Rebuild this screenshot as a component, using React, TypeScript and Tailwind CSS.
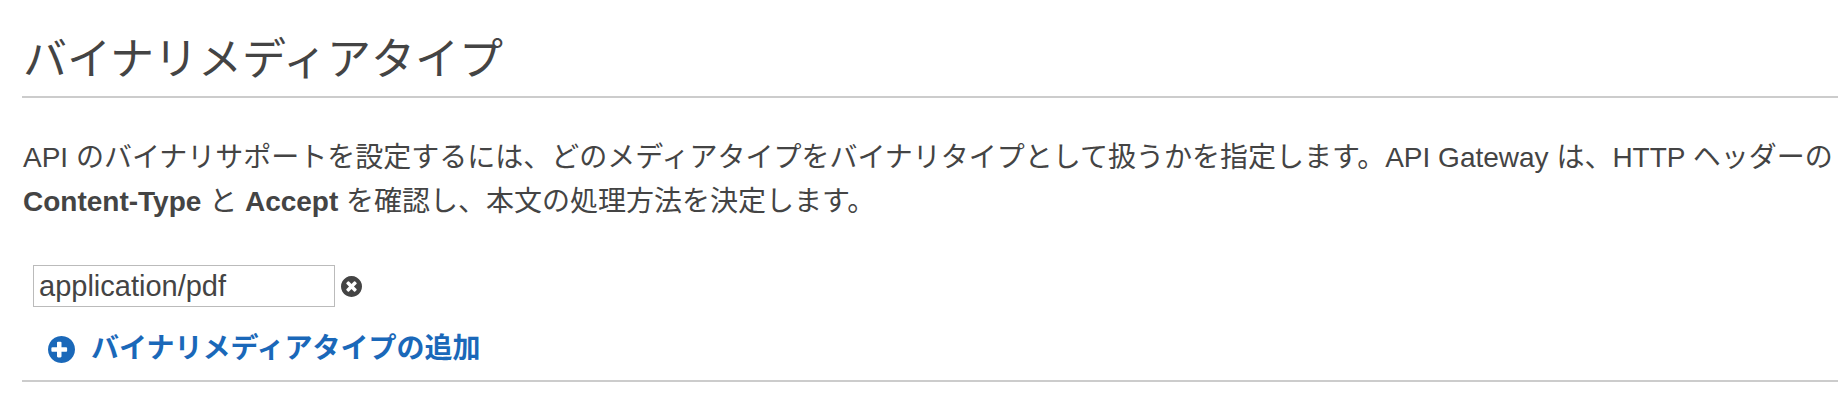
import { useState } from "react";

function PlusCircleIcon() {
  return (
    <svg viewBox="128 128 1536 1536" fill="currentColor" aria-hidden="true" className="size-[27px]">
      <path d="M1216 960v-128q0-26-19-45t-45-19h-256v-256q0-26-19-45t-45-19h-128q-26 0-45 19t-19 45v256h-256q-26 0-45 19t-19 45v128q0 26 19 45t45 19h256v256q0 26 19 45t45 19h128q26 0 45-19t19-45v-256h256q26 0 45-19t19-45zm448-64q0 209-103 385.5t-279.5 279.5-385.5 103-385.5-103-279.5-279.5-103-385.5 103-385.5 279.5-279.5 385.5-103 385.5 103 279.5 279.5 103 385.5z" />
    </svg>
  );
}

function TimesCircleIcon() {
  return (
    <svg viewBox="128 128 1536 1536" fill="currentColor" aria-hidden="true" className="size-[21px]">
      <path d="M1277 1122q0-26-19-45l-181-181 181-181q19-19 19-45 0-27-19-46l-90-90q-19-19-46-19-26 0-45 19l-181 181-181-181q-19-19-45-19-27 0-46 19l-90 90q-19 19-19 46 0 26 19 45l181 181-181 181q-19 19-19 45 0 27 19 46l90 90q19 19 46 19 26 0 45-19l181-181 181 181q19 19 45 19 27 0 46-19l90-90q19-19 19-46zm387-226q0 209-103 385.5t-279.5 279.5-385.5 103-385.5-103-279.5-279.5-103-385.5 103-385.5 279.5-279.5 385.5-103 385.5 103 279.5 279.5 103 385.5z" />
    </svg>
  );
}

export default function App() {
  const [mediaTypes, setMediaTypes] = useState(["application/pdf"]);

  const update = (index: number, value: string) =>
    setMediaTypes(mediaTypes.map((type, i) => (i === index ? value : type)));

  return (
    <main className="bg-white pt-[30px] pr-1 pb-7 pl-[22px] font-['Liberation_Sans','Noto_Sans_CJK_JP',sans-serif] text-[28px] leading-[44px] text-[#444]">
      <section className="border-b-2 border-[#ccc] pb-[9px]">
        <h1 className="border-b-2 border-[#ccc] pb-1.5 pl-px text-[44px] leading-[60px]">
          バイナリメディアタイプ
        </h1>

        <p className="mt-[38px] pl-px">
          API のバイナリサポートを設定するには、どのメディアタイプをバイナリタイプとして扱うかを指定します。API Gateway
          は、HTTP ヘッダーの <strong>Content-Type</strong> と <strong>Accept</strong>{" "}
          を確認し、本文の処理方法を決定します。
        </p>

        <ul className="mt-[41px] flex flex-col gap-2 pl-[11px]">
          {mediaTypes.map((type, index) => (
            <li key={index} className="flex items-center gap-1.5">
              <input
                type="text"
                aria-label="バイナリメディアタイプ"
                value={type}
                onChange={(e) => update(index, e.target.value)}
                className="h-[42px] w-[302px] border border-[#bbb] bg-white px-[5px] text-[29px]"
              />
              <button
                type="button"
                aria-label="削除"
                onClick={() => setMediaTypes(mediaTypes.filter((_, i) => i !== index))}
              >
                <TimesCircleIcon />
              </button>
            </li>
          ))}
        </ul>

        <button
          type="button"
          onClick={() => setMediaTypes([...mediaTypes, ""])}
          className="mt-5 ml-[26px] flex items-center gap-4 font-bold text-[#1a68b9]"
        >
          <PlusCircleIcon />
          バイナリメディアタイプの追加
        </button>
      </section>
    </main>
  );
}
